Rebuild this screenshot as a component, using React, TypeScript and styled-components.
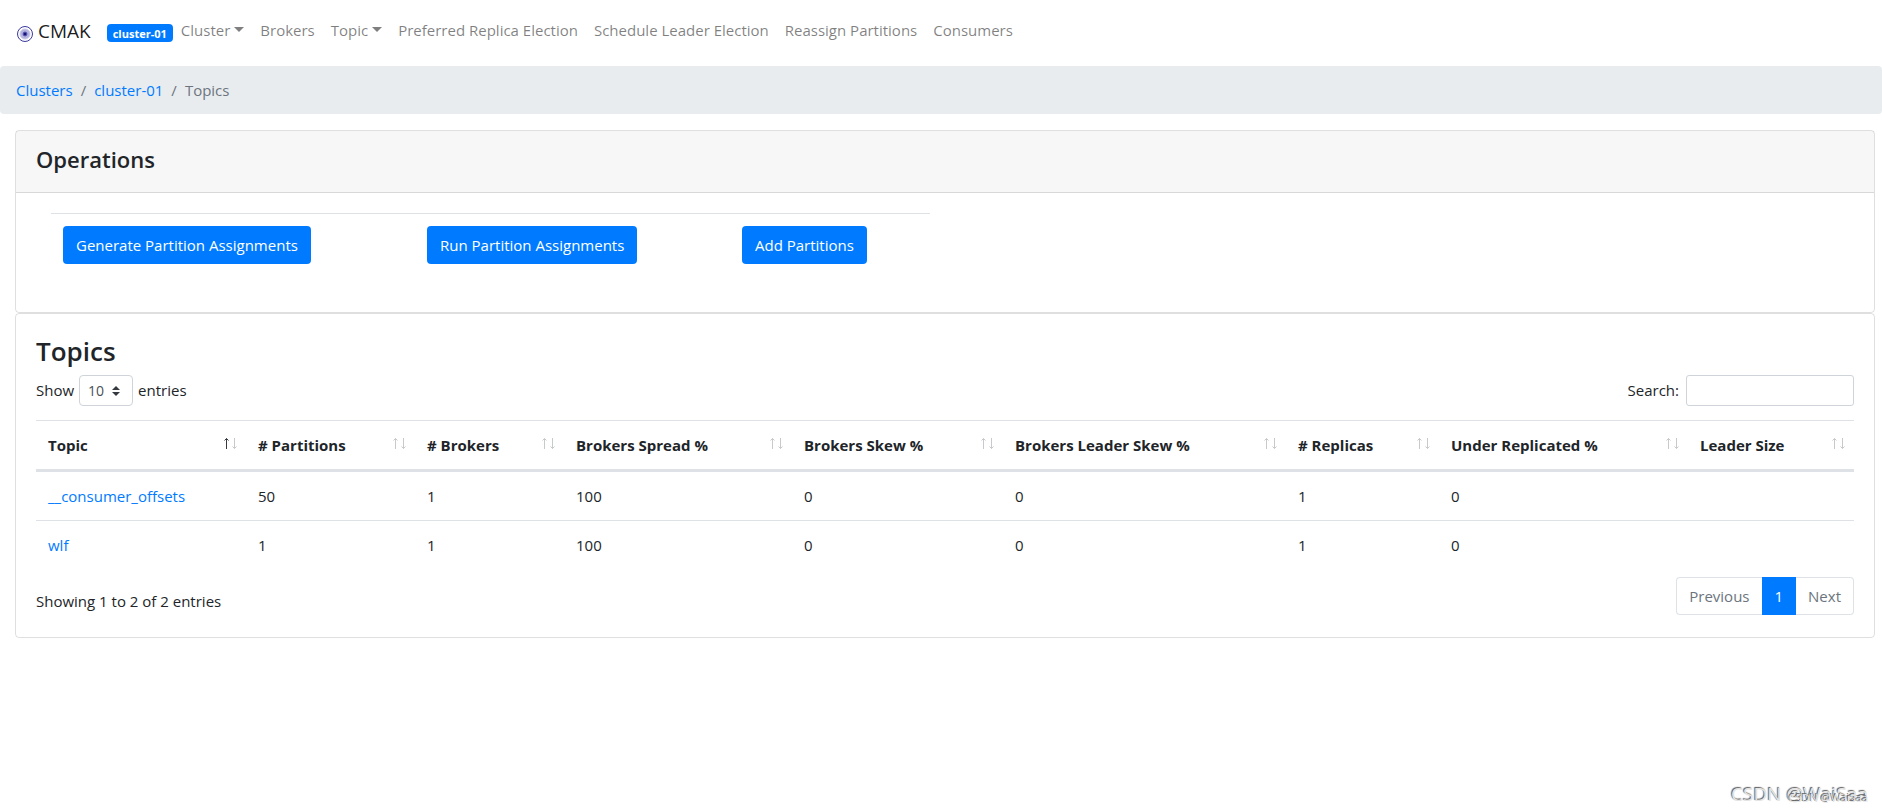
import React from "react";
import styled, { createGlobalStyle } from "styled-components";

const GlobalStyle = createGlobalStyle`
  *, *::before, *::after { box-sizing: border-box; }
  body {
    margin: 0;
    background: #fff;
    color: #212529;
    font-family: "Segoe UI", "Open Sans", "Noto Sans", sans-serif;
    font-size: 15px;
    line-height: 24px;
  }
  #root { min-height: 100vh; position: relative; }
  a { color: #007bff; text-decoration: none; }
  h3, h4, ol, ul { margin: 0; padding: 0; }
  button, input, select { font: inherit; }
`;

const Navbar = styled.nav`
  display: flex;
  align-items: center;
  padding: 8px 16px;
  height: 66px;
`;
const Brand = styled.a`
  display: flex;
  align-items: center;
  gap: 4px;
  margin-right: 16px;
  padding-bottom: 4px;
  color: rgba(0, 0, 0, 0.9);
  font-size: 19px;
  line-height: 30px;
`;
const Logo = styled.svg`
  margin-top: 6px;
`;
const ClusterBadge = styled.span`
  padding: 4px 6px 2px;
  border-radius: 4px;
  background: #007bff;
  color: #fff;
  font-size: 11px;
  font-weight: 700;
  line-height: 12px;
`;
const NavList = styled.ul`
  display: flex;
  list-style: none;
  && { padding-bottom: 6px; }
`;
const NavLink = styled.a<{ $caret?: boolean }>`
  display: block;
  padding: 8px;
  color: rgba(0, 0, 0, 0.5);
  &::after {
    content: "";
    display: ${(p) => (p.$caret ? "inline-block" : "none")};
    margin-left: 4px;
    vertical-align: 4px;
    border-top: 5px solid;
    border-left: 5px solid transparent;
    border-right: 5px solid transparent;
  }
`;

const Breadcrumb = styled.ol`
  && {
    display: flex;
    padding: 12px 16px;
    margin-bottom: 16px;
  }
  list-style: none;
  border-radius: 4px;
  background: #e9ecef;
`;
const Crumb = styled.li`
  color: #6c757d;
  & + &::before {
    content: "/";
    padding: 0 8px;
  }
`;

const Main = styled.main`
  padding: 0 7px 0 15px;
`;
const Card = styled.section`
  border: 1px solid rgba(0, 0, 0, 0.125);
  border-radius: 4px;
`;
const CardHeader = styled.header`
  padding: 13px 20px 18px;
  border-bottom: 1px solid rgba(0, 0, 0, 0.125);
  background: rgba(0, 0, 0, 0.03);
`;
const Heading = styled.h4`
  font-size: 22px;
  font-weight: 600;
  line-height: 30px;
`;
const TopicsHeading = styled.h3`
  margin-bottom: 6px;
  font-size: 26px;
  font-weight: 600;
  line-height: 35px;
`;
const OperationsBody = styled.div`
  padding: 20px 35px 48px;
`;
const OperationsGrid = styled.div`
  display: grid;
  grid-template-columns: 364fr 315fr 200fr;
  width: calc(50% - 15px);
  min-width: 720px;
  border-top: 1px solid #dee2e6;
`;
const OperationCell = styled.div`
  padding: 12px 12px 0;
`;
const PrimaryButton = styled.button`
  height: 38px;
  padding: 0 13px 1px;
  border: 0;
  border-radius: 4px;
  background: #007bff;
  color: #fff;
  white-space: nowrap;
`;

const TopicsBody = styled.div`
  padding: 20px;
`;
const Toolbar = styled.div`
  display: flex;
  justify-content: space-between;
  margin-bottom: 14px;
`;
const Field = styled.label<{ $gap: number }>`
  display: flex;
  gap: ${(p) => p.$gap}px;
  line-height: 30px;
`;
const SelectWrap = styled.span`
  position: relative;
  display: inline-flex;
`;
const LengthSelect = styled.select`
  appearance: none;
  width: 54px;
  height: 31px;
  padding: 0 8px;
  border: 1px solid #ced4da;
  border-radius: 4px;
  background: #fff;
  color: #495057;
  font-size: 14px;
`;
const SelectArrows = styled.svg`
  position: absolute;
  right: 13px;
  top: 11px;
  pointer-events: none;
`;
const SearchInput = styled.input`
  width: 168px;
  height: 31px;
  padding: 4px 8px;
  border: 1px solid #ced4da;
  border-radius: 3px;
`;

const Table = styled.table`
  width: 100%;
  table-layout: fixed;
  border-collapse: separate;
  border-spacing: 0;
`;
const HeadCell = styled.th`
  padding: 12px 9px 12px 12px;
  height: 52px;
  border-top: 1px solid #dee2e6;
  border-bottom: 3px solid #dee2e6;
  text-align: left;
  font-weight: 700;
  white-space: nowrap;
`;
const HeadContent = styled.span`
  display: flex;
  justify-content: space-between;
`;
const SortIcon = styled.svg`
  flex: none;
  margin-top: 4px;
`;
const BodyCell = styled.td`
  height: 48px;
  padding: 12px;
  tr + tr > & {
    height: 49px;
    border-top: 1px solid #dee2e6;
  }
`;

const Footer = styled.div`
  display: flex;
  justify-content: space-between;
  margin-top: 8px;
  padding-bottom: 2px;
`;
const Info = styled.div`
  padding-top: 12px;
`;
const Pagination = styled.ul`
  display: flex;
  list-style: none;
`;
const PageButton = styled.button<{ $active?: boolean }>`
  height: 38px;
  padding: 0 12px;
  border: 1px solid ${(p) => (p.$active ? "#007bff" : "#dee2e6")};
  background: ${(p) => (p.$active ? "#007bff" : "#fff")};
  color: ${(p) => (p.$active ? "#fff" : "#6c757d")};
  li:first-child > & { border-radius: 4px 0 0 4px; border-right: 0; }
  li:last-child > & { border-radius: 0 4px 4px 0; border-left: 0; }
`;

const Watermark = styled.div`
  position: absolute;
  right: 14px;
  bottom: 5px;
  color: #e4e4e4;
  font-size: 19px;
  line-height: 24px;
  text-shadow: -1px -1px 1px #555;
`;
const SmallMark = styled.span`
  position: absolute;
  right: 0;
  bottom: 0;
  font-size: 11px;
  line-height: 16px;
  white-space: nowrap;
  text-shadow: -1px -1px 0 #666;
`;

const navItems = [
  { label: "Cluster", caret: true },
  { label: "Brokers" },
  { label: "Topic", caret: true },
  { label: "Preferred Replica Election" },
  { label: "Schedule Leader Election" },
  { label: "Reassign Partitions" },
  { label: "Consumers" },
];

const operations = ["Generate Partition Assignments", "Run Partition Assignments", "Add Partitions"];

const columns = [
  { label: "Topic", width: 210 },
  { label: "# Partitions", width: 169 },
  { label: "# Brokers", width: 149 },
  { label: "Brokers Spread %", width: 228 },
  { label: "Brokers Skew %", width: 211 },
  { label: "Brokers Leader Skew %", width: 283 },
  { label: "# Replicas", width: 153 },
  { label: "Under Replicated %", width: 249 },
  { label: "Leader Size", width: 166 },
];

const Col = styled.col<{ $width: number }>`
  width: ${(p) => p.$width}px;
`;

const topics = [
  { name: "__consumer_offsets", values: ["50", "1", "100", "0", "0", "1", "0", ""] },
  { name: "wlf", values: ["1", "1", "100", "0", "0", "1", "0", ""] },
];

const SortArrows = ({ ascending }: { ascending?: boolean }) => (
  <SortIcon width="14" height="14" viewBox="0 0 14 14" fill="none" aria-hidden="true">
    <path d="M3.5 12V1.5M1.5 3.5L3.5 1.5L5.5 3.5" stroke={ascending ? "#343a40" : "#c8c9ca"} />
    <path d="M11.5 1V11.5M9.5 9.5L11.5 11.5L13.5 9.5" stroke="#c8c9ca" />
  </SortIcon>
);

export default function App() {
  return (
    <>
      <GlobalStyle />
      <Navbar>
        <Brand href="#">
          <Logo width="18" height="18" viewBox="0 0 18 18" aria-hidden="true">
            <circle cx="9" cy="9" r="7.5" fill="#fff" stroke="#3a39a0" />
            <circle cx="9" cy="9" r="5" fill="#b4b3de" stroke="#c9c8e8" />
            <circle cx="9" cy="9" r="2" fill="#14137c" stroke="#5f5eb4" />
          </Logo>
          CMAK
        </Brand>
        <ClusterBadge>cluster-01</ClusterBadge>
        <NavList>
          {navItems.map((item) => (
            <li key={item.label}>
              <NavLink href="#" $caret={item.caret}>{item.label}</NavLink>
            </li>
          ))}
        </NavList>
      </Navbar>
      <Breadcrumb>
        <Crumb><a href="#">Clusters</a></Crumb>
        <Crumb><a href="#">cluster-01</a></Crumb>
        <Crumb>Topics</Crumb>
      </Breadcrumb>
      <Main>
        <Card>
          <CardHeader><Heading>Operations</Heading></CardHeader>
          <OperationsBody>
            <OperationsGrid>
              {operations.map((label) => (
                <OperationCell key={label}>
                  <PrimaryButton type="button">{label}</PrimaryButton>
                </OperationCell>
              ))}
            </OperationsGrid>
          </OperationsBody>
        </Card>
        <Card>
          <TopicsBody>
            <TopicsHeading>Topics</TopicsHeading>
            <Toolbar>
              <Field $gap={5}>
                Show
                <SelectWrap>
                  <LengthSelect defaultValue="10">
                    <option>10</option>
                    <option>25</option>
                    <option>50</option>
                    <option>100</option>
                  </LengthSelect>
                  <SelectArrows width="8" height="10" viewBox="0 0 4 5" aria-hidden="true">
                    <path fill="#343a40" d="M2 0L0 2h4zm0 5L0 3h4z" />
                  </SelectArrows>
                </SelectWrap>
                entries
              </Field>
              <Field $gap={7}>
                Search:
                <SearchInput type="search" />
              </Field>
            </Toolbar>
            <Table>
              <colgroup>
                {columns.map((c) => <Col key={c.label} $width={c.width} />)}
              </colgroup>
              <thead>
                <tr>
                  {columns.map((c, i) => (
                    <HeadCell key={c.label} scope="col">
                      <HeadContent>{c.label}<SortArrows ascending={i === 0} /></HeadContent>
                    </HeadCell>
                  ))}
                </tr>
              </thead>
              <tbody>
                {topics.map((t) => (
                  <tr key={t.name}>
                    <BodyCell><a href="#">{t.name}</a></BodyCell>
                    {t.values.map((v, i) => <BodyCell key={i}>{v}</BodyCell>)}
                  </tr>
                ))}
              </tbody>
            </Table>
            <Footer>
              <Info>Showing 1 to 2 of 2 entries</Info>
              <Pagination>
                <li><PageButton type="button">Previous</PageButton></li>
                <li><PageButton type="button" $active>1</PageButton></li>
                <li><PageButton type="button">Next</PageButton></li>
              </Pagination>
            </Footer>
          </TopicsBody>
        </Card>
      </Main>
      <Watermark>
        CSDN @WaiSaa
        <SmallMark>CSDN @WaiSaa</SmallMark>
      </Watermark>
    </>
  );
}
